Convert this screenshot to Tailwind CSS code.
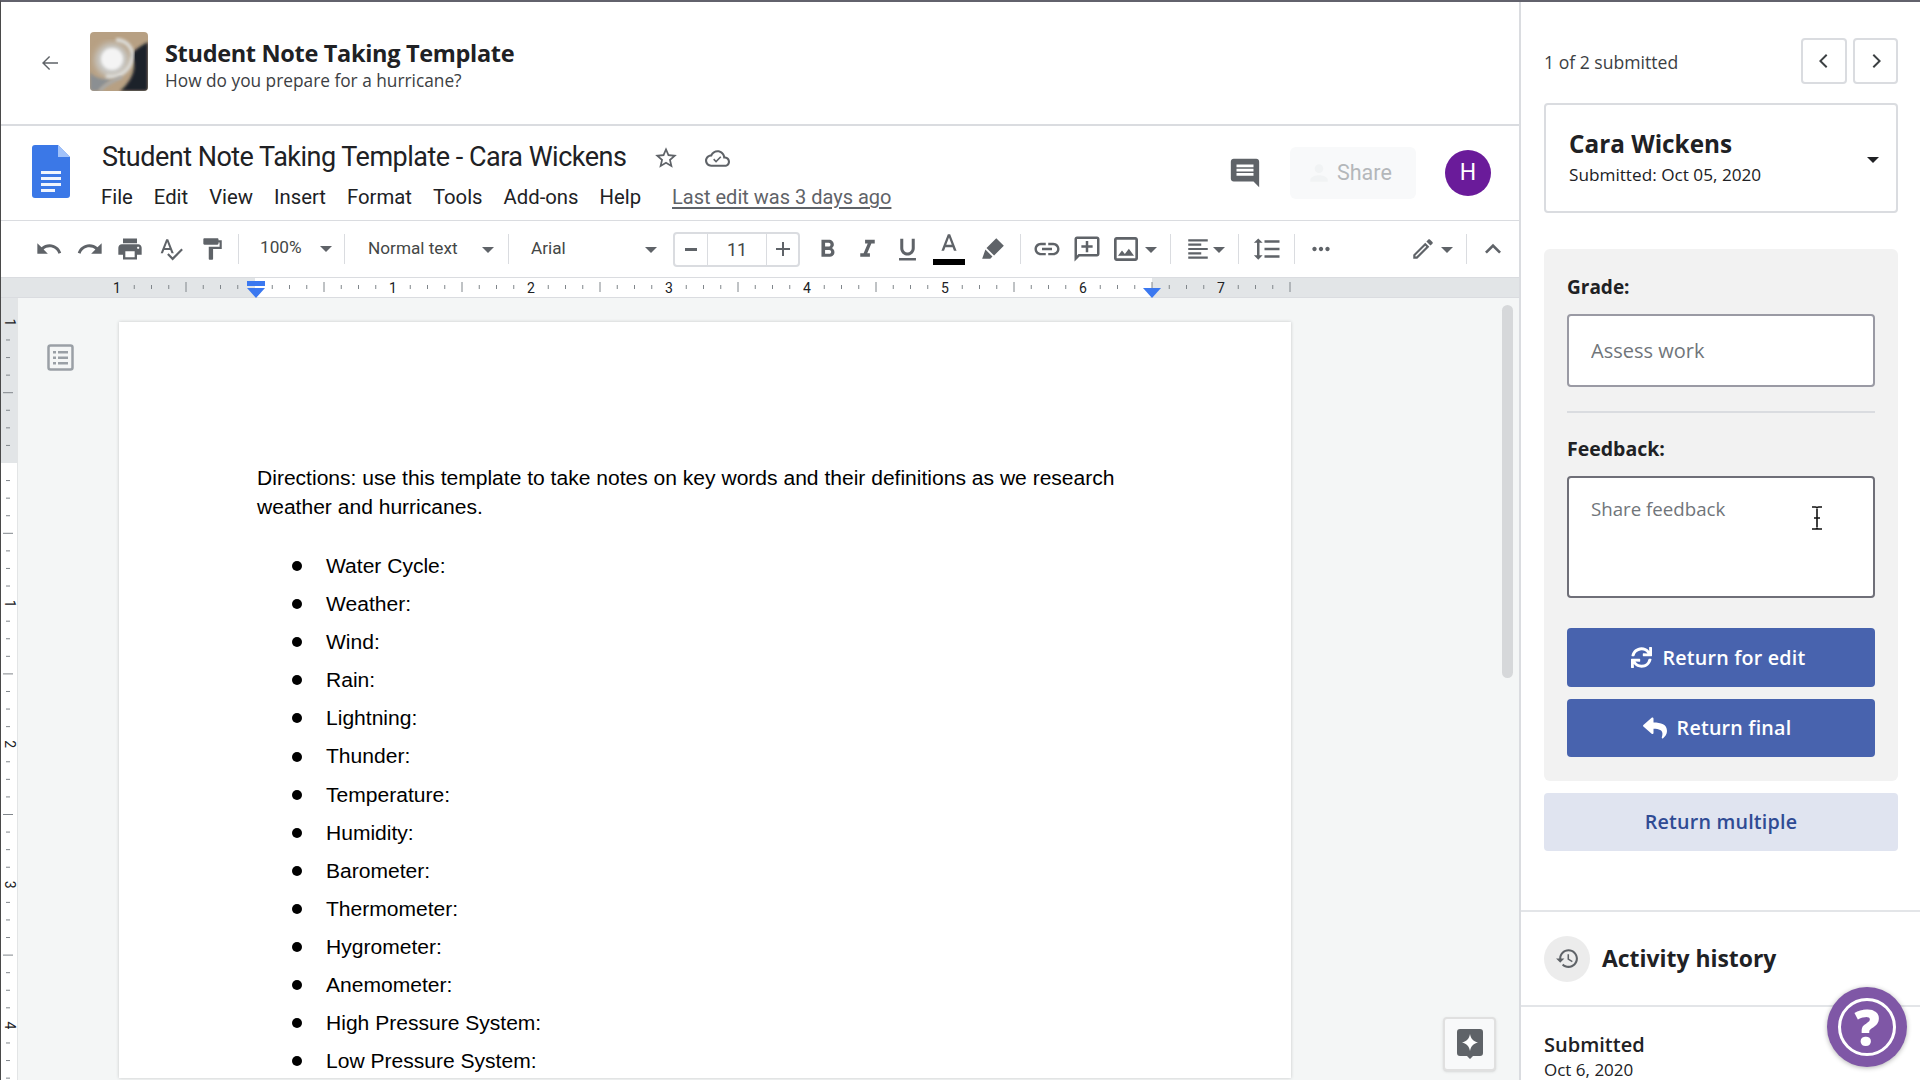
<!DOCTYPE html>
<html lang="en">
<head>
  <meta charset="UTF-8" />
  <title>Student Note Taking Template</title>
  <script src="https://cdn.jsdelivr.net/npm/@tailwindcss/browser@4"></script>
</head>
<body class="bg-white text-[#202124] antialiased overflow-hidden">
<div class="w-[1920px] h-[1080px] flex overflow-hidden border-t-2 border-l border-t-[#62626c] border-l-[#4a4a4a] font-['Open_Sans',sans-serif]">

  <!-- Left column -->
  <div class="w-[1518px] flex flex-col relative shrink-0">

    <!-- Assignment header -->
    <header class="h-[124px] shrink-0 flex items-center border-b-2 border-[#dadce0]">
      <svg class="w-[24px] h-[24px] ml-[37px] fill-[#5f6368]" viewBox="0 0 24 24"><path d="M20 11.2H6.8l5.3-5.3-1-1L4 12l7.1 7.1 1-1-5.3-5.3H20z"/></svg>
      <svg class="w-[58px] h-[59px] ml-[28px] -mt-[4px] rounded-[4px]" viewBox="0 0 58 59">
        <defs>
          <filter id="soft"><feGaussianBlur stdDeviation="1.5"/></filter>
          <filter id="softer"><feGaussianBlur stdDeviation="3"/></filter>
        </defs>
        <rect width="58" height="59" fill="#b7a083"/>
        <path d="M58 10v49H30c10-8 18-22 12-34-2-4 6-10 16-15z" fill="#1b2029" filter="url(#soft)"/>
        <path d="M0 59V40c4 6 12 8 22 6-6 6-10 9-14 13z" fill="#8b8f92" filter="url(#soft)"/>
        <circle cx="22" cy="28" r="17" fill="#c9c9c6" filter="url(#softer)"/>
        <circle cx="22" cy="27" r="11" fill="#f4f4f4" filter="url(#soft)"/>
        <path d="M16 44c14 2 24-6 26-18C44 16 36 8 26 8" fill="none" stroke="#dcdcd8" stroke-width="4" filter="url(#soft)"/>
        <path d="M10 59c6-8 14-10 22-14" fill="none" stroke="#a8aaab" stroke-width="3" filter="url(#soft)"/>
      </svg>
      <div class="ml-[17px] mt-[3px]">
        <div class="text-[23.5px] leading-[32px] font-bold tracking-[-0.32px] text-[#202124]">Student Note Taking Template</div>
        <div class="text-[17.3px] leading-[24px] text-[#3c4043]">How do you prepare for a hurricane?</div>
      </div>
    </header>

    <!-- Docs title bar -->
    <div class="h-[95px] shrink-0 flex border-b border-[#dadce0] font-['Roboto',sans-serif]">
      <svg class="w-[38px] h-[53px] ml-[31px] mt-[19px]" viewBox="0 0 38 53">
        <path d="M3 0h23l12 12v38a3 3 0 0 1-3 3H3a3 3 0 0 1-3-3V3a3 3 0 0 1 3-3z" fill="#3b78e7"/>
        <path d="M26 0l12 12H26z" fill="#a1c2fa"/>
        <path d="M9 26h20v3H9zM9 32h20v3H9zM9 38h20v3H9zM9 44h14v3H9z" fill="#f1f5fd"/>
      </svg>
      <div class="ml-[32px] mt-[13px]">
        <div class="flex items-center h-[36px]">
          <div class="text-[27px] leading-[36px] tracking-[-0.51px] text-[#202124] whitespace-nowrap">Student Note Taking Template - Cara Wickens</div>
          <svg class="w-[26px] h-[26px] ml-[27px] mt-[2px] fill-[#5f6368]" viewBox="0 0 24 24"><path d="M22 9.24l-7.19-.62L12 2 9.19 8.63 2 9.24l5.46 4.73L5.82 21 12 17.27 18.18 21l-1.63-7.03L22 9.24zM12 15.4l-3.76 2.27 1-4.28-3.32-2.88 4.38-.38L12 6.1l1.71 4.04 4.38.38-3.32 2.88 1 4.28L12 15.4z"/></svg>
          <svg class="w-[25px] h-[25px] ml-[26px] mt-[2px] fill-[#5f6368]" viewBox="0 0 24 24"><path d="M19.35 10.04C18.67 6.59 15.64 4 12 4 9.11 4 6.6 5.64 5.35 8.04 2.34 8.36 0 10.91 0 14c0 3.31 2.69 6 6 6h13c2.76 0 5-2.24 5-5 0-2.64-2.05-4.78-4.65-4.96zM19 18H6c-2.21 0-4-1.79-4-4s1.79-4 4-4h.71C7.37 7.69 9.48 6 12 6c3.04 0 5.5 2.46 5.5 5.5v.5H19c1.66 0 3 1.34 3 3s-1.34 3-3 3z"/><path d="M10.6 16 7.8 13.2l1.1-1.1 1.7 1.7 4-4 1.1 1.1z"/></svg>
        </div>
        <div class="flex gap-[21px] mt-[8px] -ml-[1px] text-[20.3px] leading-[28px] text-[#202124] whitespace-nowrap">
          <span>File</span><span>Edit</span><span>View</span><span>Insert</span><span>Format</span><span>Tools</span><span>Add-ons</span><span>Help</span>
          <span class="ml-[10px] text-[20px] text-[#5f6368] underline underline-offset-[3px]">Last edit was 3 days ago</span>
        </div>
      </div>
      <div class="ml-auto flex items-center mr-[28px] h-[94px]">
        <svg class="w-[34px] h-[34px] fill-[#5f6368]" viewBox="0 0 24 24"><path d="M21.99 4c0-1.1-.89-2-1.99-2H4c-1.1 0-2 .9-2 2v12c0 1.1.9 2 2 2h14l4 4-.01-18zM18 14H6v-2h12v2zm0-3H6V9h12v2zm0-3H6V6h12v2z"/></svg>
        <div class="ml-[28px] w-[126px] h-[52px] rounded-[6px] bg-[#f8f9fa] flex items-center pl-[16px] text-[21.5px] text-[#b4b7ba]">
          <svg class="w-[26px] h-[26px] fill-[#f1f3f4]" viewBox="0 0 24 24"><path d="M12 12c2.21 0 4-1.79 4-4s-1.79-4-4-4-4 1.79-4 4 1.79 4 4 4zm0 2c-2.67 0-8 1.34-8 4v2h16v-2c0-2.66-5.33-4-8-4z"/></svg>
          <span class="ml-[5px]">Share</span>
        </div>
        <div class="ml-[29px] w-[46px] h-[46px] rounded-full bg-[#6a1b9a] text-white flex items-center justify-center text-[23px]">H</div>
      </div>
    </div>

    <!-- Toolbar -->
    <div class="h-[56px] shrink-0 flex items-center pl-[28px] text-[#444746] font-['Roboto',sans-serif] text-[17.2px]">
      <div class="w-[40px] flex justify-center"><svg class="w-[28px] h-[28px] fill-[#5f6368]" viewBox="0 0 24 24"><path d="M12.5 8c-2.65 0-5.05.99-6.9 2.6L2 7v9h9l-3.62-3.62c1.39-1.16 3.16-1.88 5.12-1.88 3.54 0 6.55 2.31 7.6 5.5l2.37-.78C21.08 11.03 17.15 8 12.5 8z"/></svg></div>
      <div class="w-[41px] flex justify-center"><svg class="w-[28px] h-[28px] fill-[#5f6368]" viewBox="0 0 24 24"><path d="M18.4 10.6C16.55 8.99 14.15 8 11.5 8c-4.65 0-8.58 3.03-9.96 7.22L3.9 16c1.05-3.19 4.05-5.5 7.6-5.5 1.95 0 3.73.72 5.12 1.88L13 16h9V7l-3.6 3.6z"/></svg></div>
      <div class="w-[40px] flex justify-center"><svg class="w-[28px] h-[28px] fill-[#5f6368]" viewBox="0 0 24 24"><path d="M19 8H5c-1.66 0-3 1.34-3 3v6h4v4h12v-4h4v-6c0-1.66-1.34-3-3-3zm-3 11H8v-5h8v5zm3-7c-.55 0-1-.45-1-1s.45-1 1-1 1 .45 1 1-.45 1-1 1zm-1-9H6v4h12V3z"/></svg></div>
      <div class="w-[41px] flex justify-center"><svg class="w-[26px] h-[26px] fill-[#5f6368]" viewBox="0 0 24 24"><path d="M12.45 16h2.09L9.43 3H7.57L2.46 16h2.09l1.12-3h5.64l1.14 3zm-6.02-5L8.5 5.48 10.57 11H6.43zm15.16.59l-8.09 8.09L9.83 16l-1.41 1.41 5.09 5.09L23 13l-1.41-1.41z"/></svg></div>
      <div class="w-[41px] flex justify-center"><svg class="w-[26px] h-[26px] fill-[#5f6368]" viewBox="0 0 24 24"><path d="M18 4V3c0-.55-.45-1-1-1H5c-.55 0-1 .45-1 1v4c0 .55.45 1 1 1h12c.55 0 1-.45 1-1V6h1v4H9v11c0 .55.45 1 1 1h2c.55 0 1-.45 1-1v-9h8V4h-3z"/></svg></div>
      <div class="ml-[6px] w-[1px] h-[30px] bg-[#dadce0]"></div>
      <div class="w-[105px] flex items-center justify-between pl-[21px] pr-[12px] -mt-[2px]"><span>100%</span><div class="w-0 h-0 mt-[3px] border-x-[6px] border-t-[6px] border-x-transparent border-t-[#5f6368]"></div></div>
      <div class="w-[1px] h-[30px] bg-[#dadce0]"></div>
      <div class="w-[163px] flex items-center justify-between pl-[23px] pr-[14px]"><span>Normal text</span><div class="w-0 h-0 mt-[3px] border-x-[6px] border-t-[6px] border-x-transparent border-t-[#5f6368]"></div></div>
      <div class="w-[1px] h-[30px] bg-[#dadce0]"></div>
      <div class="w-[164px] flex items-center justify-between pl-[22px] pr-[16px]"><span>Arial</span><div class="w-0 h-0 mt-[3px] border-x-[6px] border-t-[6px] border-x-transparent border-t-[#5f6368]"></div></div>
      <div class="w-[127px] h-[35px] flex items-center border-2 border-[#dadce0] rounded-[4px] text-[18px]">
        <div class="w-[33px] h-full flex items-center justify-center border-r border-[#dadce0]"><div class="w-[12px] h-[3px] bg-[#5f6368]"></div></div>
        <div class="w-[58px] text-center">11</div>
        <div class="flex-1 h-full flex items-center justify-center border-l border-[#dadce0]"><svg class="w-[24px] h-[24px] fill-[#5f6368]" viewBox="0 0 24 24"><path d="M19 13h-6v6h-2v-6H5v-2h6V5h2v6h6z"/></svg></div>
      </div>
      <div class="ml-[7px] w-[40px] flex justify-center"><svg class="w-[29px] h-[29px] fill-[#5f6368]" viewBox="0 0 24 24"><path d="M15.6 10.79c.97-.67 1.65-1.77 1.65-2.79 0-2.26-1.75-4-4-4H7v14h7.04c2.09 0 3.71-1.7 3.71-3.79 0-1.52-.86-2.82-2.15-3.42zM10 6.5h3c.83 0 1.5.67 1.5 1.5s-.67 1.5-1.5 1.5h-3v-3zm3.5 9H10v-3h3.5c.83 0 1.5.67 1.5 1.5s-.67 1.5-1.5 1.5z"/></svg></div>
      <div class="w-[40px] flex justify-center"><svg class="w-[29px] h-[29px] fill-[#5f6368]" viewBox="0 0 24 24"><path d="M10 4v3h2.21l-3.42 8H6v3h8v-3h-2.21l3.42-8H18V4z"/></svg></div>
      <div class="w-[41px] flex justify-center"><svg class="w-[29px] h-[29px] fill-[#5f6368]" viewBox="0 0 24 24"><path d="M12 17c3.31 0 6-2.69 6-6V3h-2.5v8c0 1.93-1.57 3.5-3.5 3.5S8.5 12.93 8.5 11V3H6v8c0 3.31 2.69 6 6 6zm-7 2v2h14v-2H5z"/></svg></div>
      <div class="w-[41px] flex flex-col items-center"><svg class="w-[28px] h-[26px] fill-[#5f6368]" viewBox="0 0 24 22"><path d="M11 1L5.5 15h2.25l1.12-3h6.25l1.12 3h2.25L13 1h-2zm-1.38 9L12 3.67 14.38 10H9.62z"/></svg><div class="w-[32px] h-[6px] bg-black"></div></div>
      <div class="w-[47px] flex justify-center"><svg class="w-[26px] h-[26px] fill-[#5f6368]" viewBox="0 0 24 24"><path d="M15 2l7 7-9 9-7-7zM5 12.5l6.5 6.5-2 2H2z"/></svg></div>
      <div class="ml-[4px] w-[1px] h-[30px] bg-[#dadce0]"></div>
      <div class="w-[52px] flex justify-center"><svg class="w-[30px] h-[30px] fill-[#5f6368]" viewBox="0 0 24 24"><path d="M3.9 12c0-1.71 1.39-3.1 3.1-3.1h4V7H7c-2.76 0-5 2.24-5 5s2.24 5 5 5h4v-1.9H7c-1.71 0-3.1-1.39-3.1-3.1zM8 13h8v-2H8v2zm9-6h-4v1.9h4c1.71 0 3.1 1.39 3.1 3.1s-1.39 3.1-3.1 3.1h-4V17h4c2.76 0 5-2.24 5-5s-2.24-5-5-5z"/></svg></div>
      <div class="w-[28px] flex justify-center"><svg class="w-[30px] h-[30px] shrink-0 fill-[#5f6368]" viewBox="0 0 24 24"><path d="M20 2H4c-1.1 0-2 .9-2 2v18l4-4h14c1.1 0 2-.9 2-2V4c0-1.1-.9-2-2-2zm0 14H5.17L4 17.17V4h16v12z"/><path d="M13 5.5h-2V9H7.5v2H11v3.500h2V11h3.500V9H13z"/></svg></div>
      <div class="w-[69px] flex items-center pl-[9px]"><svg class="w-[32px] h-[32px] shrink-0 fill-[#5f6368]" viewBox="0 0 24 24"><path d="M19 5v14H5V5h14m0-2H5c-1.1 0-2 .9-2 2v14c0 1.1.9 2 2 2h14c1.1 0 2-.9 2-2V5c0-1.1-.9-2-2-2zm-4.860 8.860l-3 3.870L9 13.140 6 17h12l-3.860-5.140z"/></svg><div class="w-0 h-0 ml-[3px] mt-[2px] border-x-[6px] border-t-[6px] border-x-transparent border-t-[#5f6368]"></div></div>
      <div class="w-[1px] h-[30px] bg-[#dadce0]"></div>
      <div class="w-[67px] flex items-center pl-[14px]"><svg class="w-[26px] h-[26px] shrink-0 fill-[#5f6368]" viewBox="0 0 24 24"><path d="M15 15H3v2h12v-2zm0-8H3v2h12V7zM3 13h18v-2H3v2zm0 8h18v-2H3v2zM3 3v2h18V3H3z"/></svg><div class="w-0 h-0 ml-[2px] mt-[2px] border-x-[6px] border-t-[6px] border-x-transparent border-t-[#5f6368]"></div></div>
      <div class="w-[1px] h-[30px] bg-[#dadce0]"></div>
      <div class="w-[55px] flex justify-center"><svg class="w-[30px] h-[30px] fill-[#5f6368]" viewBox="0 0 24 24"><path d="M6 7h2.500L5 3.500 1.500 7H4v10H1.500L5 20.500 8.500 17H6V7zm4-2v2h12V5H10zm0 14h12v-2H10v2zm0-6h12v-2H10v2z"/></svg></div>
      <div class="w-[1px] h-[30px] bg-[#dadce0]"></div>
      <div class="w-[52px] flex justify-center"><svg class="w-[26px] h-[26px] fill-[#5f6368]" viewBox="0 0 24 24"><path d="M6 10c-1.100 0-2 .9-2 2s.9 2 2 2 2-.9 2-2-.9-2-2-2zm12 0c-1.100 0-2 .9-2 2s.9 2 2 2 2-.9 2-2-.9-2-2-2zm-6 0c-1.100 0-2 .9-2 2s.9 2 2 2 2-.9 2-2-.9-2-2-2z"/></svg></div>
      <div class="w-[119px] flex items-center justify-end pr-[13px]"><svg class="w-[26px] h-[26px] fill-[#5f6368]" viewBox="0 0 24 24"><path d="M3 17.250V21h3.750L17.810 9.940l-3.750-3.750L3 17.250zM5.920 19H5v-.92l9.060-9.060.92.92L5.920 19zM20.710 7.040c.39-.39.39-1.020 0-1.410l-2.340-2.340c-.39-.39-1.020-.39-1.410 0l-1.830 1.830 3.750 3.750 1.830-1.830z"/></svg><div class="w-0 h-0 ml-[5px] mt-[2px] border-x-[6px] border-t-[6px] border-x-transparent border-t-[#5f6368]"></div></div>
      <div class="w-[1px] h-[30px] bg-[#dadce0]"></div>
      <div class="w-[51px] flex justify-center"><svg class="w-[32px] h-[32px] fill-[#5f6368]" viewBox="0 0 24 24"><path d="M12 8l-6 6 1.410 1.410L12 10.830l4.590 4.580L18 14z"/></svg></div>
    </div>

    <!-- Horizontal ruler -->
    <div class="h-[21px] shrink-0 relative bg-[#e2e5e7] border-t border-b border-[#dadce0] overflow-visible">
      <div class="absolute left-[254px] top-0 bottom-0 w-[897px] bg-white"></div>
      <svg id="hruler" class="absolute left-0 top-0" width="1518" height="19"></svg>
      <svg class="absolute left-[246px] top-[3px]" width="18" height="17" viewBox="0 0 18 17"><path d="M0 0h18v5H0zM0 7h18L9 17z" fill="#3b78f0"/></svg>
      <svg class="absolute left-[1142px] top-[10px]" width="18" height="10" viewBox="0 0 18 10"><path d="M0 0h18L9 10z" fill="#3b78f0"/></svg>
    </div>

    <!-- Document area -->
    <div class="flex-1 min-h-0 flex relative bg-[#f4f6f6]">
      <svg id="vruler" class="shrink-0 border-r border-[#e3e5e6]" width="17" height="782"></svg>
      <div class="w-[29px] mt-[46px] ml-[29px] h-[26px] shrink-0">
        <svg class="w-[27px] h-[27px]" viewBox="0 0 27 27"><rect x="1.500" y="1.500" width="24" height="24" rx="2" fill="none" stroke="#9aa0a6" stroke-width="2.500"/><path d="M6 7h3v2.500H6zM11 7h10v2.500H11zM6 12.500h3V15H6zM11 12.500h10V15H11zM6 18h3v2.500H6zM11 18h10v2.500H11z" fill="#9aa0a6"/></svg>
      </div>
      <!-- Page -->
      <main class="w-[1172px] ml-[43px] mt-[24px] h-[756px] bg-white shadow-[0_0_3px_rgba(60,64,67,0.25)] shrink-0 overflow-hidden pl-[138px] pt-[141px] text-black text-[21.05px] font-['Liberation_Sans',Arial,sans-serif]">
        <p class="leading-[29px] w-[880px]">Directions: use this template to take notes on key words and their definitions as we research weather and hurricanes.</p>
        <ul class="mt-[26px] leading-[38.1px]">
          <li class="flex items-center"><div class="w-[10px] h-[10px] rounded-full bg-black ml-[35px] mr-[24px]"></div>Water Cycle:</li>
          <li class="flex items-center"><div class="w-[10px] h-[10px] rounded-full bg-black ml-[35px] mr-[24px]"></div>Weather:</li>
          <li class="flex items-center"><div class="w-[10px] h-[10px] rounded-full bg-black ml-[35px] mr-[24px]"></div>Wind:</li>
          <li class="flex items-center"><div class="w-[10px] h-[10px] rounded-full bg-black ml-[35px] mr-[24px]"></div>Rain:</li>
          <li class="flex items-center"><div class="w-[10px] h-[10px] rounded-full bg-black ml-[35px] mr-[24px]"></div>Lightning:</li>
          <li class="flex items-center"><div class="w-[10px] h-[10px] rounded-full bg-black ml-[35px] mr-[24px]"></div>Thunder:</li>
          <li class="flex items-center"><div class="w-[10px] h-[10px] rounded-full bg-black ml-[35px] mr-[24px]"></div>Temperature:</li>
          <li class="flex items-center"><div class="w-[10px] h-[10px] rounded-full bg-black ml-[35px] mr-[24px]"></div>Humidity:</li>
          <li class="flex items-center"><div class="w-[10px] h-[10px] rounded-full bg-black ml-[35px] mr-[24px]"></div>Barometer:</li>
          <li class="flex items-center"><div class="w-[10px] h-[10px] rounded-full bg-black ml-[35px] mr-[24px]"></div>Thermometer:</li>
          <li class="flex items-center"><div class="w-[10px] h-[10px] rounded-full bg-black ml-[35px] mr-[24px]"></div>Hygrometer:</li>
          <li class="flex items-center"><div class="w-[10px] h-[10px] rounded-full bg-black ml-[35px] mr-[24px]"></div>Anemometer:</li>
          <li class="flex items-center"><div class="w-[10px] h-[10px] rounded-full bg-black ml-[35px] mr-[24px]"></div>High Pressure System:</li>
          <li class="flex items-center"><div class="w-[10px] h-[10px] rounded-full bg-black ml-[35px] mr-[24px]"></div>Low Pressure System:</li>
        </ul>
      </main>
      <!-- Scrollbar -->
      <div class="absolute left-[1501px] top-[7px] w-[11px] h-[373px] rounded-full bg-[#d6d8da]"></div>
      <!-- Explore button -->
      <div class="absolute left-[1442px] top-[719px] w-[53px] h-[54px] flex items-center justify-center bg-[#f8f9fa] border-2 border-[#e0e0e0] rounded-[4px] shadow-sm">
        <svg class="w-[26px] h-[30px]" viewBox="0 0 26 30"><path d="M3 0h20a3 3 0 0 1 3 3v21a3 3 0 0 1-3 3h-7l-3 3-3-3H3a3 3 0 0 1-3-3V3a3 3 0 0 1 3-3z" fill="#5f6368"/><path d="M13 5c1 5 3 7 8 8.500-5 1.500-7 3.500-8 8.500-1-5-3-7-8-8.500 5-1.500 7-3.500 8-8.500z" fill="#fff"/></svg>
      </div>
    </div>
  </div>

  <!-- Right panel -->
  <aside class="flex-1 border-l-2 border-[#dadce0] bg-white relative text-[#202124]">
    <div class="pl-[23px] pr-[22px]">
      <div class="flex items-center justify-between mt-[36px] h-[46px]">
        <span class="text-[17.6px] mt-[2px] text-[#3c4043]">1 of 2 submitted</span>
        <div class="flex gap-[6px]">
          <div class="w-[46px] h-[46px] border-2 border-[#dadce0] rounded-[4px] flex items-center justify-center"><svg class="w-[24px] h-[24px] fill-[#3c4043]" viewBox="0 0 24 24"><path d="M15.400 6.400 14 5l-7 7 7 7 1.400-1.400L9.800 12z"/></svg></div>
          <div class="w-[45px] h-[46px] border-2 border-[#dadce0] rounded-[4px] flex items-center justify-center"><svg class="w-[24px] h-[24px] fill-[#3c4043]" viewBox="0 0 24 24"><path d="M8.600 6.400 10 5l7 7-7 7-1.400-1.400 5.600-5.600z"/></svg></div>
        </div>
      </div>
      <div class="mt-[19px] h-[110px] border-2 border-[#dadce0] rounded-[4px] flex items-center justify-between pl-[23px] pr-[17px]">
        <div>
          <div class="text-[24.3px] leading-[32px] font-bold">Cara Wickens</div>
          <div class="text-[17.2px] leading-[26px] mt-[2px]">Submitted: Oct 05, 2020</div>
        </div>
        <div class="w-0 h-0 mt-[4px] border-x-[6px] border-t-[6px] border-x-transparent border-t-[#202124]"></div>
      </div>
      <section class="mt-[36px] h-[532px] bg-[#f2f2f2] rounded-[6px] px-[23px] pt-[24px]">
        <label class="block text-[19px] leading-[28px] font-bold">Grade:</label>
        <input class="mt-[13px] w-full h-[73px] bg-white border-2 border-[#9a9aa4] rounded-[4px] px-[22px] text-[20px] placeholder:text-[#70757a]" placeholder="Assess work" />
        <div class="mt-[24px] h-[2px] bg-[#dadce0]"></div>
        <label class="block mt-[22px] text-[19.5px] leading-[28px] font-bold">Feedback:</label>
        <div class="relative mt-[13px] h-[122px]">
          <textarea class="block w-full h-full resize-none bg-white border-2 border-[#6f6f78] rounded-[4px] px-[22px] py-[18px] text-[18.7px] leading-[26px] placeholder:text-[#70757a]" placeholder="Share feedback"></textarea>
          <svg class="absolute left-[244px] top-[30px]" width="12" height="24" viewBox="0 0 12 24"><path d="M1 1h3.500c1 0 1.500.5 1.500 1.500 0-1 .5-1.500 1.500-1.500H11M6 3v18M1 23h3.500c1 0 1.500-.5 1.500-1.500 0 1 .5 1.500 1.500 1.500H11M3 12h6" fill="none" stroke="#111" stroke-width="1.600"/></svg>
        </div>
        <button class="mt-[30px] w-full h-[59px] bg-[#4863ae] rounded-[4px] flex items-center justify-center pr-[6px] text-white text-[19.7px] font-semibold tracking-[0.2px]">
          <svg class="w-[21px] h-[21px] fill-white mr-[11px]" viewBox="0 0 512 512"><path d="M440.650 12.570l4 82.770A247.160 247.160 0 0 0 255.830 8C134.730 8 33.910 94.920 12.290 209.820A12 12 0 0 0 24.090 224h49.050a12 12 0 0 0 11.670-9.260 175.910 175.910 0 0 1 317-56.940l-101.460-4.860a12 12 0 0 0-12.570 12v47.410a12 12 0 0 0 12 12H500a12 12 0 0 0 12-12V12a12 12 0 0 0-12-12h-47.370a12 12 0 0 0-11.980 12.570zM255.830 432a175.610 175.610 0 0 1-146-77.800l101.800 4.870a12 12 0 0 0 12.570-12v-47.400a12 12 0 0 0-12-12H12a12 12 0 0 0-12 12V500a12 12 0 0 0 12 12h47.350a12 12 0 0 0 12-12.600l-4.150-82.570A247.170 247.170 0 0 0 255.830 504c121.110 0 221.930-86.920 243.550-201.820a12 12 0 0 0-11.800-14.180h-49.050a12 12 0 0 0-11.670 9.260A175.860 175.860 0 0 1 255.830 432z"/></svg>
          Return for edit
        </button>
        <button class="mt-[12px] w-full h-[58px] bg-[#4863ae] rounded-[4px] flex items-center justify-center pr-[8px] text-white text-[19.7px] font-semibold tracking-[0.2px]">
          <svg class="w-[24px] h-[24px] fill-white mr-[10px]" viewBox="0 0 512 512"><path d="M8.309 189.836L184.313 37.851C199.719 24.546 224 35.347 224 56.015v80.053c160.629 1.839 288 34.032 288 186.258 0 61.441-39.581 122.309-83.333 154.132-13.653 9.931-33.111-2.533-28.077-18.631 45.344-145.012-21.507-183.510-176.590-185.742V360c0 20.700-24.300 31.453-39.687 18.164l-176.004-152c-11.071-9.562-11.086-26.753 0-36.328z"/></svg>
          Return final
        </button>
      </section>
      <button class="mt-[12px] w-full h-[58px] bg-[#e0e4f0] rounded-[4px] text-[#2f4b94] text-[19.7px] font-semibold tracking-[0.2px]">Return multiple</button>
    </div>
    <div class="mt-[59px] h-[97px] border-y-2 border-[#e3e5e8] flex items-center pl-[23px]">
      <div class="w-[46px] h-[46px] rounded-full bg-[#ececec] flex items-center justify-center"><svg class="w-[25px] h-[25px] fill-[#5f6368]" viewBox="0 0 24 24"><path d="M13 3c-4.970 0-9 4.030-9 9H1l3.890 3.890.07.140L9 12H6c0-3.870 3.130-7 7-7s7 3.130 7 7-3.130 7-7 7c-1.930 0-3.680-.79-4.940-2.060l-1.420 1.420C8.270 19.990 10.510 21 13 21c4.970 0 9-4.030 9-9s-4.030-9-9-9zm-1 5v5l4.280 2.540.72-1.210-3.500-2.080V8H12z"/></svg></div>
      <span class="ml-[12px] mt-[2px] text-[22.9px] font-bold">Activity history</span>
    </div>
    <div class="pl-[23px] pt-[24px]">
      <div class="text-[20px] leading-[28px] font-semibold">Submitted</div>
      <div class="text-[17px] leading-[22px]">Oct 6, 2020</div>
    </div>
    <!-- Help button -->
    <div class="absolute left-[306px] top-[985px] w-[80px] h-[80px] rounded-full bg-[#7f57a6] shadow-[0_1px_5px_rgba(0,0,0,0.3)] flex items-center justify-center">
      <div class="w-[58px] h-[58px] rounded-full border-[3px] border-white text-white flex items-center justify-center text-[50px] leading-none font-extrabold">?</div>
    </div>
  </aside>
</div>

<script>
  // rulers are just repeated ticks, so draw them here
  const NS = 'http://www.w3.org/2000/svg';
  const tickColor = '#80868b';

  function add(svg, name, attrs, text) {
    const el = document.createElementNS(NS, name);
    Object.keys(attrs).forEach(k => el.setAttribute(k, attrs[k]));
    if (text) el.textContent = text;
    svg.appendChild(el);
  }

  // horizontal: 138px per inch, zero at x=254
  const h = document.getElementById('hruler');
  const hZero = 254, hInch = 138;
  for (let i = -8; i <= 60; i++) {
    const x = hZero + i * hInch / 8;
    if (x > 1290) break;
    if (i % 8 === 0) {
      if (i !== 0) add(h, 'text', { x: x, y: 15, 'text-anchor': 'middle', 'font-family': 'Roboto', 'font-size': 14, fill: '#202124' }, String(Math.abs(i / 8)));
    } else if (i % 4 === 0) {
      add(h, 'line', { x1: x, x2: x, y1: 4, y2: 14, stroke: tickColor });
    } else {
      add(h, 'line', { x1: x, x2: x, y1: 7, y2: 11, stroke: tickColor });
    }
  }

  // vertical: 140.6px per inch, zero at y=165 (top of doc area is 298)
  const v = document.getElementById('vruler');
  const vZero = 165, vInch = 140.6;
  add(v, 'rect', { x: 0, y: 0, width: 17, height: vZero, fill: '#e2e5e7' });
  add(v, 'rect', { x: 0, y: vZero, width: 17, height: 620, fill: '#fff' });
  for (let i = -8; i <= 36; i++) {
    const y = vZero + i * vInch / 8;
    if (i % 8 === 0) {
      if (i !== 0) add(v, 'text', { x: 0, y: 0, transform: `translate(4 ${y}) rotate(90)`, 'text-anchor': 'middle', 'font-family': 'Roboto', 'font-size': 14, fill: '#202124' }, String(Math.abs(i / 8)));
    } else if (i % 4 === 0) {
      add(v, 'line', { x1: 2, x2: 12, y1: y, y2: y, stroke: tickColor });
    } else {
      add(v, 'line', { x1: 5, x2: 9, y1: y, y2: y, stroke: tickColor });
    }
  }
</script>
</body>
</html>
